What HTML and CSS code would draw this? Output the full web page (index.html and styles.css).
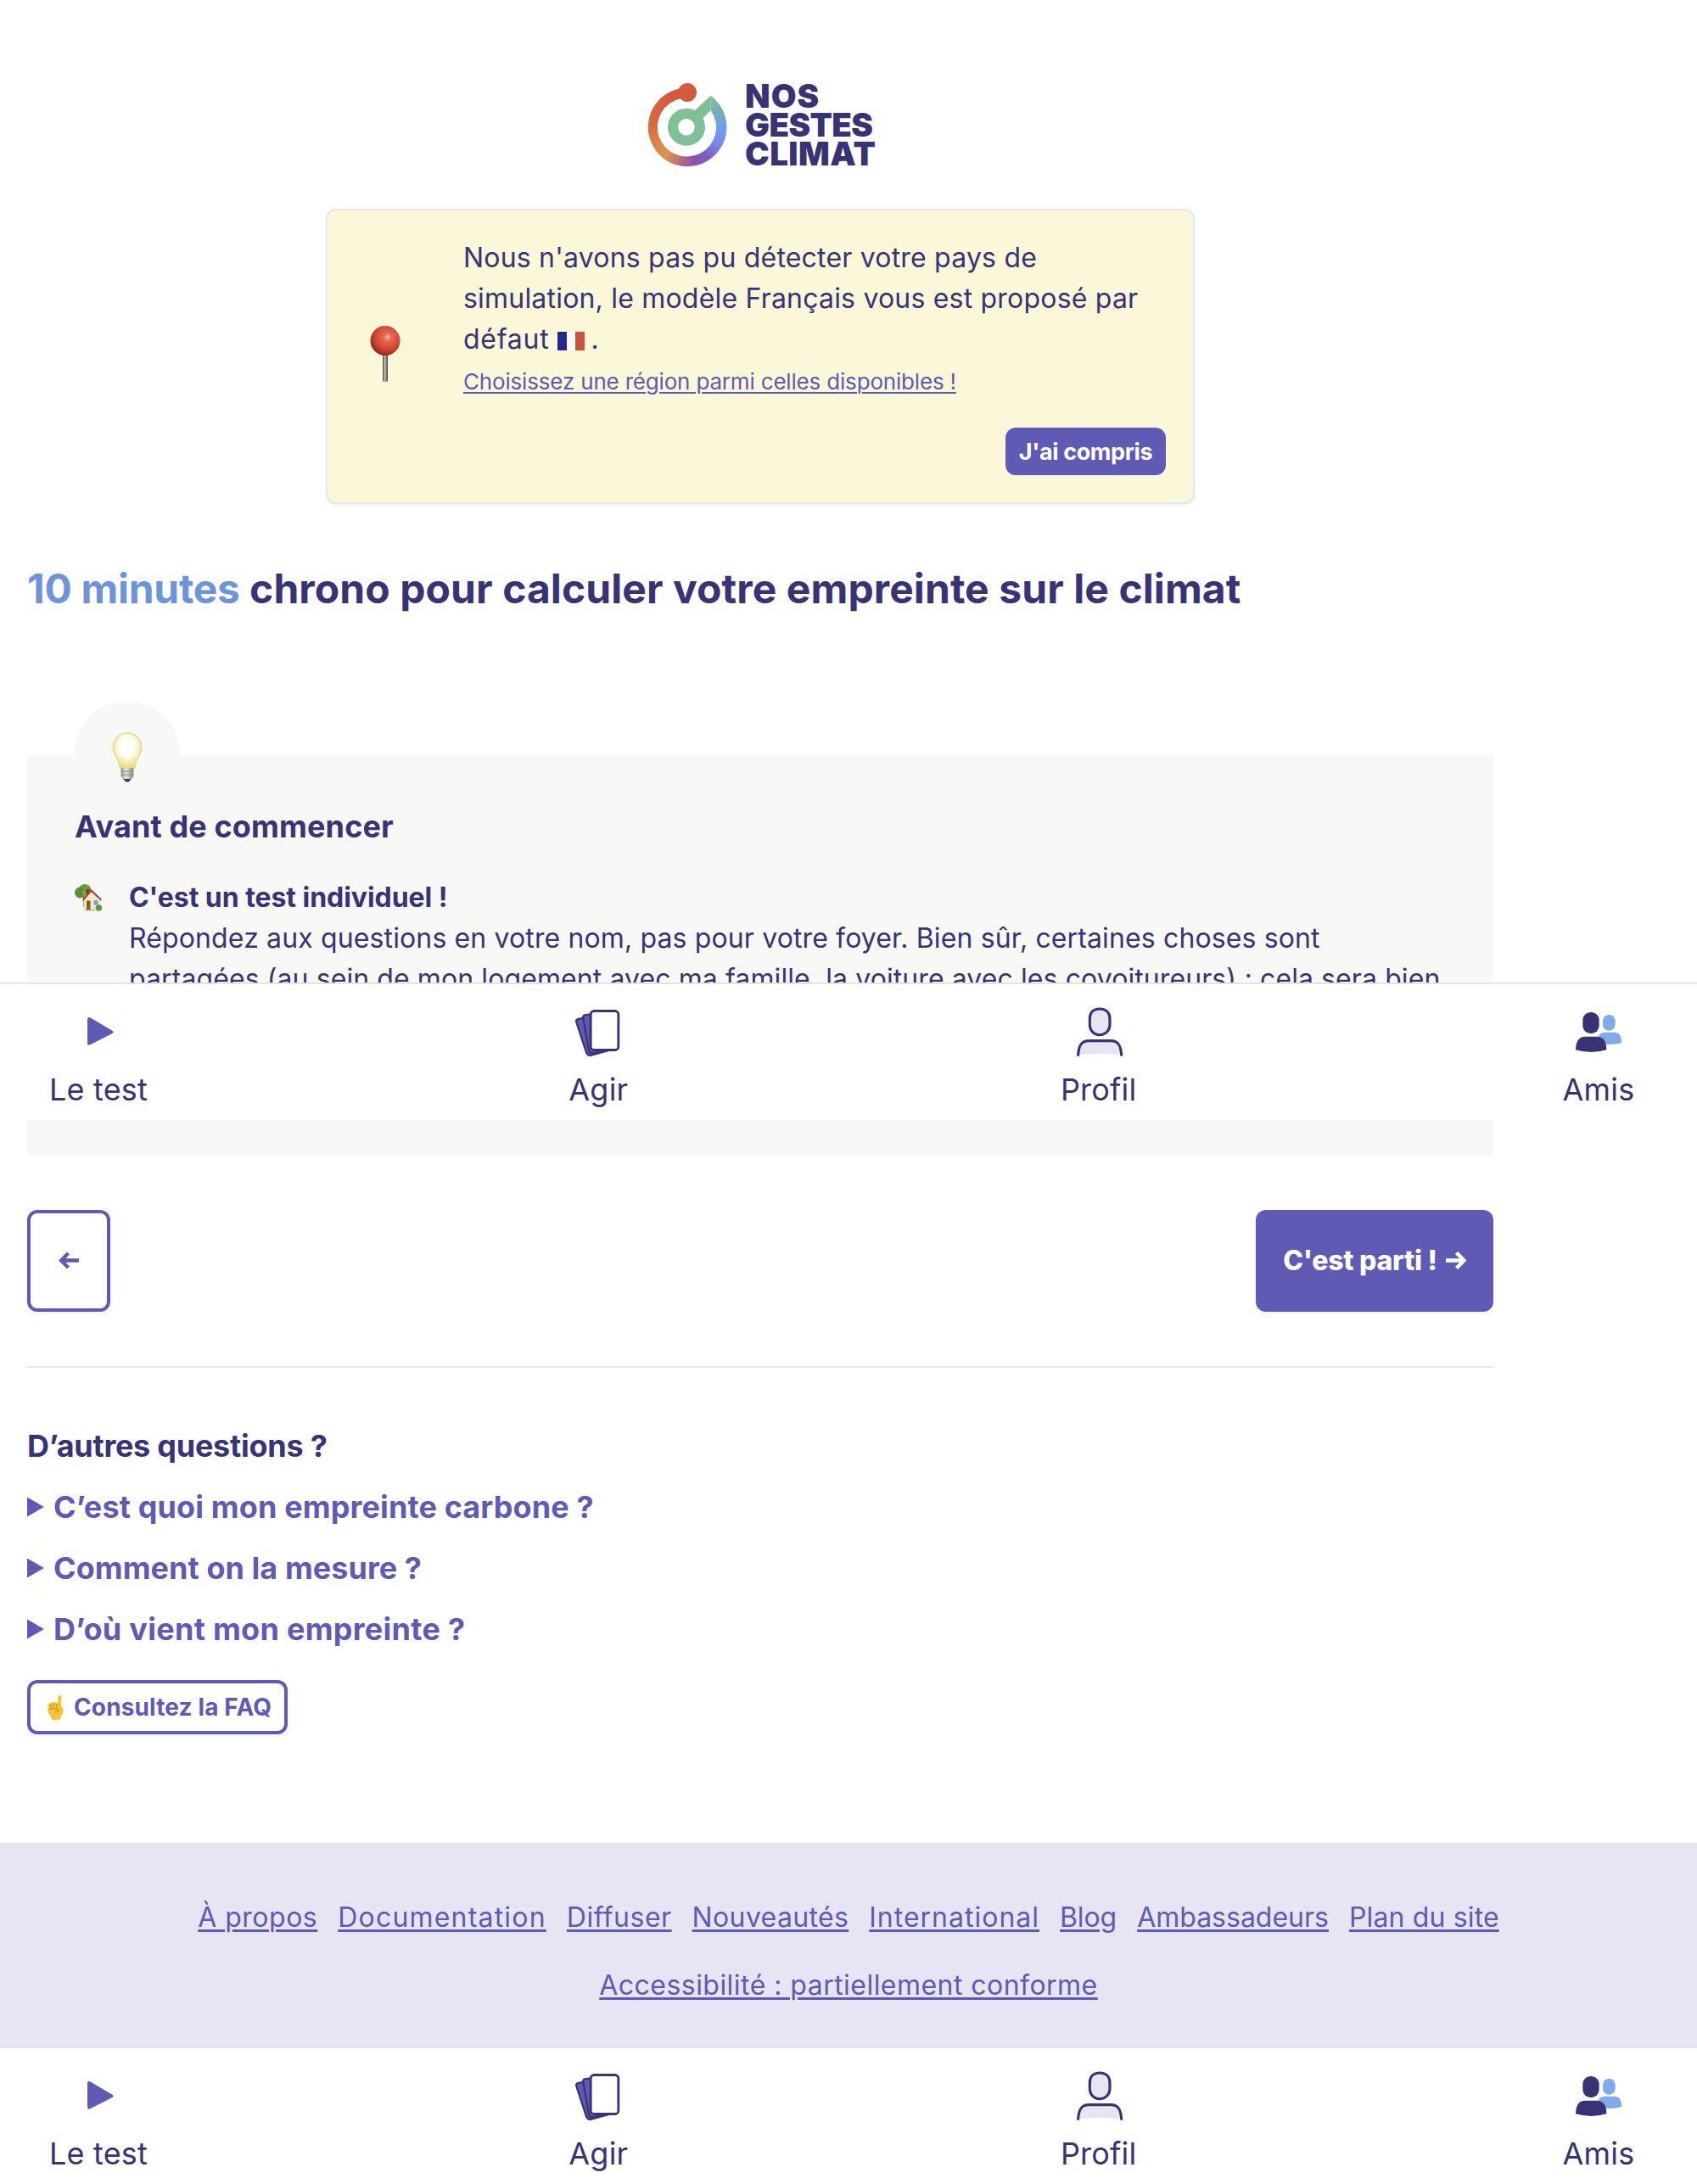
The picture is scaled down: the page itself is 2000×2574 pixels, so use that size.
FILE: index.html
```html
<!DOCTYPE html>
<html lang="fr">
<head>
<meta charset="utf-8">
<title>Nos Gestes Climat</title>
<link rel="stylesheet" href="styles.css">
</head>
<body>
<svg class="sprite" aria-hidden="true">
  <symbol id="icon-play" viewBox="73 102 192 192">
    <path d="M130 153q0-9 10-5l78 46q7 5 0 10l-78 40q-10 4-10-5z" fill="#5f5ab3"/>
  </symbol>
  <symbol id="icon-cards" viewBox="100 72 192 192">
    <g fill="#5f5ab3" stroke="#373374" stroke-width="6.500" stroke-linejoin="round">
      <path d="M150 118L124 123q-8 3-5 12l35 107q5 12 18 9l62-17z"/>
      <path d="M175 105L148 109q-7 3-5 11l20 116q4 10 14 7l60-10z"/>
      <rect x="169.500" y="94.500" width="98" height="138" rx="12" fill="#fff" stroke-width="8.500"/>
    </g>
  </symbol>
  <symbol id="icon-profile" viewBox="69 72 192 192">
    <g fill="#e7e5f4" stroke="#373374" stroke-width="9.500" stroke-linecap="round">
      <path d="M168 87c23 0 36 14 36 35v18c0 23-14 39-36 39s-35-16-35-39v-18c0-21 13-35 35-35z"/>
      <path d="M92 250c2-32 11-50 36-50h81c25 0 34 18 36 50q-76-8-153 0z" stroke="none"/>
      <path d="M92 250c2-32 11-50 36-50h81c25 0 34 18 36 50" fill="none"/>
    </g>
  </symbol>
  <symbol id="icon-friends" viewBox="94 72 192 192">
    <g fill="#82a9e8">
      <rect x="205" y="108" width="44" height="56" rx="21"/>
      <path d="M186 207c1-26 8-37 26-37h33c18 0 27 13 26 37q-40 12-85 0z"/>
    </g>
    <g fill="#373374">
      <rect x="134" y="99" width="58" height="75" rx="27"/>
      <path d="M109 232c1-31 11-47 34-47h41c23 0 34 16 34 47q-54 16-109 0z"/>
    </g>
  </symbol>
</svg>

<main class="page">
  <a class="logo">
    <span class="logo-mark">
      <span class="logo-ring"></span>
      <svg class="logo-arm" viewBox="0 0 96 104">
        <path d="M74.700 14.700 74.700 32 65.300 41.300 55.500 32.500z" fill="#80c097"/>
        <circle cx="46" cy="51.800" r="15.900" fill="none" stroke="#80c097" stroke-width="12.200"/>
        <circle cx="47" cy="11" r="11" fill="#d25b3f"/>
      </svg>
    </span>
    <span class="logo-text"><span class="nos">NOS</span><span class="gestes">GESTES</span><span class="climat">CLIMAT</span></span>
  </a>

  <section class="banner">
    <svg class="pin" viewBox="0 0 36 68">
      <defs>
        <radialGradient id="pin-head" cx=".58" cy=".38" r=".62"><stop offset="0" stop-color="#f7b5a0"/><stop offset=".22" stop-color="#e4694f"/><stop offset=".7" stop-color="#cf432f"/><stop offset="1" stop-color="#8f2b1e"/></radialGradient>
        <linearGradient id="pin-stem"><stop offset="0" stop-color="#4b4540"/><stop offset=".45" stop-color="#c9c3b4"/><stop offset="1" stop-color="#3f3a35"/></linearGradient>
      </defs>
      <rect x="15" y="33" width="6" height="34" rx="2" fill="url(#pin-stem)"/>
      <circle cx="18" cy="18.500" r="17.500" fill="url(#pin-head)"/>
    </svg>
    <div class="banner-body">
      <p class="banner-text"><span class="line-a">Nous n'avons pas pu détecter votre pays de</span><br><span class="line-a">simulation, le modèle Français vous est proposé par</span><br><span class="line-c">défaut</span> <svg class="flag" viewBox="0 0 32 22"><path fill="#25298c" d="M0 0h11v22H0z"/><path fill="#fff" d="M11 0h10v22H11z"/><path fill="#c75340" d="M21 0h11v22H21z"/></svg><span class="dot"> .</span></p>
      <a class="banner-link">Choisissez une région parmi celles disponibles !</a>
      <button class="btn-small">J'ai compris</button>
    </div>
  </section>

  <h1><span class="accent">10 minutes</span> chrono pour calculer votre empreinte sur le climat</h1>

  <section class="card">
    <div class="bulb-tab">
      <svg class="bulb" viewBox="0 0 36 60">
        <defs>
          <radialGradient id="glow" cx=".5" cy=".38" r=".6"><stop offset="0" stop-color="#fff"/><stop offset=".5" stop-color="#fffdf0"/><stop offset="1" stop-color="#eedb7c"/></radialGradient>
          <linearGradient id="cap"><stop offset="0" stop-color="#8f8f8b"/><stop offset=".4" stop-color="#e6e6e2"/><stop offset="1" stop-color="#858582"/></linearGradient>
        </defs>
        <path d="M18 1C28 1 35 8 35 18c0 10-8 15-8 25H9C9 33 1 28 1 18 1 8 8 1 18 1z" fill="url(#glow)" stroke="#ebd984" stroke-width="1.500"/>
        <path d="M10.500 43h15v10l-3 4h-9l-3-4z" fill="url(#cap)"/>
        <path d="M10.500 47.500l15-1M10.500 51.500l15-1" stroke="#8c8c88" stroke-width="1"/>
        <path d="M13.500 56h9l-2.500 3.500h-4z" fill="#3c3c3c"/>
      </svg>
    </div>
    <h2>Avant de commencer</h2>
    <div class="tip">
      <svg class="house" viewBox="0 0 33 32">
        <path d="M10 12h4v15h-4z" fill="#7b5a35"/>
        <circle cx="12" cy="7.500" r="7.500" fill="#6a9c3c"/><circle cx="6.500" cy="10" r="6.500" fill="#5c8f35"/><circle cx="14" cy="11" r="5" fill="#77a946"/>
        <path d="M10.500 17l9-9 11 10v12h-20z" fill="#f5e7c2"/>
        <path d="M9 18.500L19.500 6 32 18l-1.200 1.600L19.500 9 10.200 20z" fill="#a93f2b"/>
        <path d="M13.500 6h4v3l-4 4z" fill="#8c3526"/>
        <path d="M14 19.500h4.500V30H14z" fill="#91552e"/><path d="M22 18.500h6v6.500h-6z" fill="#6fa3dc" stroke="#fff" stroke-width=".8"/>
        <path d="M12 30h12v1.500H12z" fill="#b9b2a2"/><circle cx="28.500" cy="28" r="3.800" fill="#639a37"/>
      </svg>
      <div class="tip-text">
        <strong>C'est un test individuel !</strong>
        <p>Répondez aux questions en votre nom, pas pour votre foyer. Bien sûr, certaines choses sont<br><span class="line-last">partagées (au sein de mon logement avec ma famille, la voiture avec les covoitureurs) ; cela sera bien</span></p>
      </div>
    </div>
  </section>

  <div class="actions">
    <button class="btn-outline btn-back" aria-label="Retour"><svg class="arrow" viewBox="0 0 24 20"><path d="M24 10H4M11.500 1.500L3 10l8.500 8.500" /></svg></button>
    <button class="btn-main"><span>C'est parti !</span><svg class="arrow" viewBox="0 0 24 21"><path d="M0 10.500h20M12.500 1.500l9 9-9 9"/></svg></button>
  </div>

  <section class="faq">
    <h2>D’autres questions ?</h2>
    <details><summary class="q1">C’est quoi mon empreinte carbone ?</summary></details>
    <details><summary class="q2">Comment on la mesure ?</summary></details>
    <details><summary class="q3">D’où vient mon empreinte ?</summary></details>
    <a class="btn-outline btn-faq">
      <svg class="finger" viewBox="0 0 19 29">
        <path d="M12.500 2q0-2 2-2t2 2l-.5 11q2.500 1 2.500 4.500 0 5-3 7.500v3q-6 2-11 0l-.5-3Q.5 22 .5 16v-4q0-2.500 2-2.500Q3.500 8 5.500 8.500 7 7 9 8.500q2-.5 2.700 1z" fill="#f2c736"/>
        <path d="M4 10.500v5M7.500 9.500v5.500M11 10v5M2 17q4-2.500 9-1 3 .5 2.500 2.500-3 0-5 1.500" fill="none" stroke="#c78a1c" stroke-width="1"/>
      </svg>
      <span>Consultez la FAQ</span>
    </a>
  </section>
</main>

<footer class="footer">
  <div class="footer-links">
    <a>À propos</a><a>Documentation</a><a>Diffuser</a><a>Nouveautés</a><a>International</a><a>Blog</a><a>Ambassadeurs</a><a>Plan du site</a>
  </div>
  <div class="footer-legal"><a>Accessibilité : partiellement conforme</a></div>
</footer>

<nav class="tabs">
  <a><svg><use href="#icon-play"/></svg>Le test</a>
  <a><svg><use href="#icon-cards"/></svg>Agir</a>
  <a><svg><use href="#icon-profile"/></svg>Profil</a>
  <a><svg><use href="#icon-friends"/></svg>Amis</a>
</nav>
<nav class="tabs tabs-floating">
  <a><svg><use href="#icon-play"/></svg>Le test</a>
  <a><svg><use href="#icon-cards"/></svg>Agir</a>
  <a><svg><use href="#icon-profile"/></svg>Profil</a>
  <a><svg><use href="#icon-friends"/></svg>Amis</a>
</nav>
</body>
</html>
```

FILE: styles.css
```css
:root {
  --primary: #5f5ab3;
  --dark: #373374;
}

* { box-sizing: border-box; }

body {
  position: relative;
  margin: 0;
  background: #fff;
  color: var(--dark);
  font: 32px/48px Inter, sans-serif;
  letter-spacing: 0.13px;
}

h1, h2, p { margin: 0; }

button { border: 0; font-family: inherit; }

.sprite { display: none; }

.page {
  display: flex;
  flex-direction: column;
  width: 1792px;
  height: 2172px;
  padding: 98px 32px 0;
}

/* Logo */
.logo {
  display: flex;
  align-self: center;
  gap: 19px;
  width: 266px;
  height: 104px;
}

.logo-mark {
  position: relative;
  flex: none;
  width: 96px;
  height: 104px;
}

.logo-ring, .logo-arm {
  position: absolute;
  inset: 0;
  width: 96px;
  height: 104px;
}

.logo-ring {
  background: conic-gradient(from 0deg at 46px 52px, #80c097 0deg, #80c097 40deg, #76b0b4 60deg, #7099f4 95deg, #7a86e8 120deg, #7b5fc4 145deg, #8c52ad 168deg, #b56f78 190deg, #db9250 215deg, #da8a4b 235deg, #d46d45 270deg, #d25b3f 330deg);
  clip-path: path("M74.7 14.7 A46.3 46.3 0 1 1 39 6.3 L40 18 A34.6 34.6 0 1 0 74.7 32 Z");
}

.logo-text {
  display: flex;
  flex-direction: column;
  font-size: 38.5px;
  font-weight: 900;
  line-height: 34px;
  margin-top: -2px;
}

.nos { letter-spacing: 1px; }
.gestes { letter-spacing: -0.6px; }
.climat { letter-spacing: 0.4px; }

/* Country notice */
.banner {
  display: flex;
  align-items: center;
  align-self: center;
  width: 1024px;
  height: 348px;
  margin-top: 44px;
  padding: 32px 32px 32px 50px;
  border: 2px solid #e5e7eb;
  border-radius: 12px;
  background: #fbf7d9;
  box-shadow: 0 2px 4px rgba(0, 0, 0, 0.06);
}

.pin {
  flex: none;
  width: 36px;
  height: 68px;
  margin: 0 74px 6px 0;
}

.banner-body {
  display: flex;
  flex: 1;
  flex-direction: column;
  align-items: flex-start;
}

.line-a { letter-spacing: 0.2px; }
.line-c { letter-spacing: 0.75px; }
.dot { letter-spacing: -1px; }

.flag {
  width: 32px;
  height: 22px;
  vertical-align: -2px;
}

.banner-link {
  margin-top: 6px;
  color: var(--primary);
  font-size: 26px;
  line-height: 40px;
  letter-spacing: -0.18px;
  text-decoration: underline;
  text-decoration-thickness: 2px;
  text-underline-offset: 3px;
}

.btn-small {
  align-self: flex-end;
  width: 189px;
  height: 56px;
  margin-top: 34px;
  padding: 0;
  border-radius: 12px;
  background: var(--primary);
  color: #fff;
  font-size: 27px;
  font-weight: 700;
  letter-spacing: -0.4px;
}

/* Intro */
h1 {
  margin-top: 64px;
  font-size: 48px;
  font-weight: 700;
  line-height: 72px;
  letter-spacing: 0.08px;
}

.accent {
  color: #6d94db;
  letter-spacing: -0.3px;
}

h2 {
  font-size: 36px;
  font-weight: 700;
  line-height: 54px;
}

.card {
  position: relative;
  height: 472px;
  margin-top: 160px;
  padding: 57px 56px 0;
  background: #f8f8f7;
}

.bulb-tab {
  position: absolute;
  top: -64px;
  left: 56px;
  width: 124px;
  height: 124px;
  padding: 37px 44px 0;
  border-radius: 50%;
  background: #f8f8f7;
}

.bulb {
  display: block;
  width: 36px;
  height: 59px;
}

.tip {
  display: flex;
  margin-top: 33px;
}

.house {
  flex: none;
  width: 33px;
  height: 32px;
  margin: 8px 31px 0 0;
}

.tip-text { white-space: nowrap; }

.tip-text strong { letter-spacing: -0.05px; }

.line-last { letter-spacing: 0.09px; }

/* Previous / next */
.actions {
  display: flex;
  justify-content: space-between;
  height: 186px;
  margin-top: 64px;
  padding-bottom: 64px;
  border-bottom: 2px solid #e6e6ec;
}

.btn-outline {
  border: 4px solid var(--primary);
  border-radius: 12px;
  background: #fff;
  color: var(--primary);
  box-shadow: 0 2px 4px rgba(0, 0, 0, 0.06);
}

.btn-back {
  display: flex;
  align-items: center;
  justify-content: center;
  width: 98px;
  height: 120px;
  padding: 0 0 1px;
}

.arrow {
  width: 24px;
  height: 21px;
  fill: none;
  stroke: currentColor;
  stroke-width: 4.4;
}

.btn-main {
  display: flex;
  align-items: center;
  justify-content: center;
  gap: 10px;
  width: 280px;
  height: 120px;
  padding: 0 0 1px;
  border-radius: 12px;
  background: var(--primary);
  box-shadow: 0 2px 4px rgba(0, 0, 0, 0.06);
  color: #fff;
  font-size: 32px;
  font-weight: 800;
  letter-spacing: -0.25px;
}

/* FAQ */
.faq {
  display: flex;
  flex-direction: column;
  align-items: flex-start;
  gap: 18px;
  margin-top: 65px;
}

.faq h2 { letter-spacing: -0.25px; }

summary {
  display: flex;
  align-items: center;
  gap: 11px;
  color: var(--primary);
  font-size: 36px;
  font-weight: 700;
  line-height: 54px;
}

summary::before {
  width: 20px;
  height: 23px;
  background: var(--primary);
  clip-path: polygon(0 0, 100% 50%, 0 100%);
  content: "";
}

.q2 { letter-spacing: 0.05px; }
.q3 { letter-spacing: 0.28px; }

.btn-faq {
  display: flex;
  align-items: center;
  gap: 12px;
  width: 307px;
  height: 64px;
  margin-top: 15px;
  padding-left: 20px;
  font-size: 28px;
  font-weight: 700;
  white-space: nowrap;
}

.finger {
  width: 19px;
  height: 29px;
}

/* Footer */
.footer {
  height: 240px;
  padding-top: 64px;
  background: #e7e5f4;
}

.footer a {
  color: var(--primary);
  text-decoration: underline;
  text-decoration-thickness: 3px;
  text-underline-offset: 3px;
}

.footer-links {
  display: flex;
  justify-content: center;
  gap: 24px;
}

.footer-links a:nth-child(1) { letter-spacing: 0.5px; }
.footer-links a:nth-child(2) { letter-spacing: 1.2px; }
.footer-links a:nth-child(3) { letter-spacing: 0.5px; }
.footer-links a:nth-child(4) { letter-spacing: 0.35px; }
.footer-links a:nth-child(5) { letter-spacing: 1px; }
.footer-links a:nth-child(6) { letter-spacing: -0.1px; }
.footer-links a:nth-child(7) { letter-spacing: 0; }
.footer-links a:nth-child(8) { letter-spacing: 0.15px; }

.footer-legal {
  display: flex;
  justify-content: center;
  margin-top: 32px;
  letter-spacing: 0.46px;
}

/* Bottom tab bar */
.tabs {
  display: flex;
  justify-content: space-between;
  height: 162px;
  padding: 24px 16px 0;
  border-top: 2px solid #e3e4de;
  background: #fff;
}

.tabs a {
  display: flex;
  flex-direction: column;
  align-items: center;
  gap: 9px;
  width: 200px;
  font-size: 36px;
  line-height: 54px;
  letter-spacing: 0.2px;
}

.tabs svg {
  width: 64px;
  height: 64px;
}

/* Second bar, pinned over the page content */
.tabs-floating {
  position: absolute;
  top: 1158px;
  left: 0;
  width: 100%;
}
```
